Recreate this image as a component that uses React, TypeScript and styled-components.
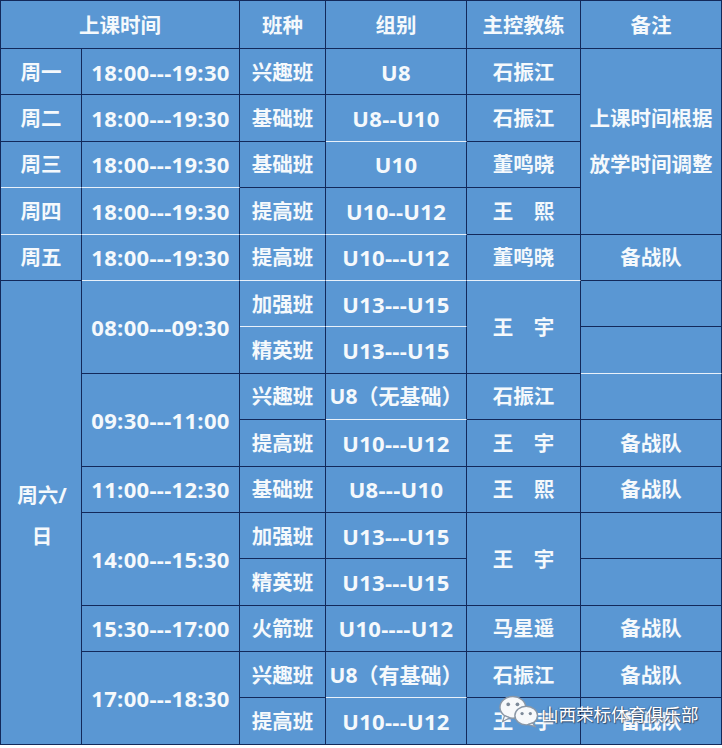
import styled, { createGlobalStyle } from 'styled-components';

type CellData = {
  r: number;
  c: number;
  rs?: number;
  cs?: number;
  text?: string;
  lift?: boolean;
};

type Script = 'latin' | 'cjk' | 'mixed';

const GAP = '\u3000';

// rows are 1-based grid lines: 1 = header, 2..6 = weekdays, 7..16 = weekend
const cells: CellData[] = [
  { r: 1, c: 1, cs: 2, text: '上课时间' },
  { r: 1, c: 3, text: '班种' },
  { r: 1, c: 4, text: '组别' },
  { r: 1, c: 5, text: '主控教练' },
  { r: 1, c: 6, text: '备注' },

  { r: 2, c: 1, text: '周一' },
  { r: 2, c: 2, text: '18:00---19:30' },
  { r: 2, c: 3, text: '兴趣班' },
  { r: 2, c: 4, text: 'U8' },
  { r: 2, c: 5, text: '石振江' },
  { r: 2, c: 6, rs: 4, text: '上课时间根据\n放学时间调整' },

  { r: 3, c: 1, text: '周二' },
  { r: 3, c: 2, text: '18:00---19:30' },
  { r: 3, c: 3, text: '基础班' },
  { r: 3, c: 4, text: 'U8--U10', lift: true },
  { r: 3, c: 5, text: '石振江' },

  { r: 4, c: 1, text: '周三', lift: true },
  { r: 4, c: 2, text: '18:00---19:30', lift: true },
  { r: 4, c: 3, text: '基础班' },
  { r: 4, c: 4, text: 'U10' },
  { r: 4, c: 5, text: '董鸣晓' },

  { r: 5, c: 1, text: '周四', lift: true },
  { r: 5, c: 2, text: '18:00---19:30', lift: true },
  { r: 5, c: 3, text: '提高班', lift: true },
  { r: 5, c: 4, text: 'U10--U12', lift: true },
  { r: 5, c: 5, text: `王${GAP}熙` },

  { r: 6, c: 1, text: '周五' },
  { r: 6, c: 2, text: '18:00---19:30', lift: true },
  { r: 6, c: 3, text: '提高班', lift: true },
  { r: 6, c: 4, text: 'U10---U12', lift: true },
  { r: 6, c: 5, text: '董鸣晓', lift: true },
  { r: 6, c: 6, text: '备战队' },

  { r: 7, c: 1, rs: 10, text: '周六/\n日' },

  { r: 7, c: 2, rs: 2, text: '08:00---09:30' },
  { r: 7, c: 3, text: '加强班', lift: true },
  { r: 7, c: 4, text: 'U13---U15', lift: true },
  { r: 7, c: 5, rs: 2, text: `王${GAP}宇` },
  { r: 7, c: 6 },
  { r: 8, c: 3, text: '精英班' },
  { r: 8, c: 4, text: 'U13---U15' },
  { r: 8, c: 6, lift: true },

  { r: 9, c: 2, rs: 2, text: '09:30---11:00' },
  { r: 9, c: 3, text: '兴趣班' },
  { r: 9, c: 4, text: 'U8（无基础）', lift: true },
  { r: 9, c: 5, text: '石振江' },
  { r: 9, c: 6 },
  { r: 10, c: 3, text: '提高班' },
  { r: 10, c: 4, text: 'U10---U12' },
  { r: 10, c: 5, text: `王${GAP}宇` },
  { r: 10, c: 6, text: '备战队' },

  { r: 11, c: 2, text: '11:00---12:30' },
  { r: 11, c: 3, text: '基础班' },
  { r: 11, c: 4, text: 'U8---U10' },
  { r: 11, c: 5, text: `王${GAP}熙` },
  { r: 11, c: 6, text: '备战队' },

  { r: 12, c: 2, rs: 2, text: '14:00---15:30' },
  { r: 12, c: 3, text: '加强班' },
  { r: 12, c: 4, text: 'U13---U15' },
  { r: 12, c: 5, rs: 2, text: `王${GAP}宇` },
  { r: 12, c: 6 },
  { r: 13, c: 3, text: '精英班' },
  { r: 13, c: 4, text: 'U13---U15' },
  { r: 13, c: 6 },

  { r: 14, c: 2, text: '15:30---17:00' },
  { r: 14, c: 3, text: '火箭班' },
  { r: 14, c: 4, text: 'U10----U12' },
  { r: 14, c: 5, text: '马星遥' },
  { r: 14, c: 6, text: '备战队' },

  { r: 15, c: 2, rs: 2, text: '17:00---18:30' },
  { r: 15, c: 3, text: '兴趣班' },
  { r: 15, c: 4, text: 'U8（有基础）', lift: true },
  { r: 15, c: 5, text: '石振江' },
  { r: 15, c: 6, text: '备战队' },
  { r: 16, c: 3, text: '提高班' },
  { r: 16, c: 4, text: 'U10---U12' },
  { r: 16, c: 5, text: `王${GAP}宇` },
  { r: 16, c: 6, text: '备战队' },
];

const scriptOf = (text = ''): Script => {
  const latin = /[A-Za-z0-9]/.test(text);
  const cjk = /[\u4e00-\u9fff]/.test(text);
  if (latin && cjk) return 'mixed';
  return latin ? 'latin' : 'cjk';
};

function WechatMark() {
  return (
    <svg width="42" height="34" viewBox="0 0 40 33">
      <ellipse cx="14" cy="12" rx="12.5" ry="10.5" fill="#f7f9fb" stroke="#8a97a6" strokeWidth="1.4" />
      <path d="M6 20 L4 26 L11 22 Z" fill="#f7f9fb" stroke="#8a97a6" strokeWidth="1.2" strokeLinejoin="round" />
      <circle cx="9.5" cy="9" r="1.8" fill="#7d8a99" />
      <circle cx="18.5" cy="9" r="1.8" fill="#7d8a99" />
      <ellipse cx="27" cy="20" rx="11" ry="9" fill="#f7f9fb" stroke="#8a97a6" strokeWidth="1.4" />
      <path d="M33 27 L36 31 L29 28.5 Z" fill="#f7f9fb" stroke="#8a97a6" strokeWidth="1.2" strokeLinejoin="round" />
      <circle cx="23" cy="18" r="1.6" fill="#7d8a99" />
      <circle cx="31" cy="18" r="1.6" fill="#7d8a99" />
    </svg>
  );
}

function App() {
  return (
    <>
      <GlobalStyle />
      <Page>
        <Table>
          {cells.map((cell) => (
            <Cell
              key={`${cell.r}-${cell.c}`}
              $r={cell.r}
              $c={cell.c}
              $rs={cell.rs ?? 1}
              $cs={cell.cs ?? 1}
              $lift={!!cell.lift}
              $script={scriptOf(cell.text)}
              $tall={cell.r === 7 && cell.c === 1}
            >
              {cell.text}
            </Cell>
          ))}
        </Table>
        <Watermark>
          <WechatMark />
          <MarkText>山西荣标体育俱乐部</MarkText>
        </Watermark>
      </Page>
    </>
  );
}

export default App;

const GlobalStyle = createGlobalStyle`
  html, body {
    margin: 0;
    padding: 0;
    background: #ffffff;
  }
`;

const Page = styled.div`
  position: relative;
  width: 722px;
  height: 748px;
  overflow: hidden;
`;

const Table = styled.div`
  display: grid;
  grid-template-columns: 81px 158px 86px 141px 114px 141px;
  grid-template-rows: 48px repeat(15, 46.4px);
  border-top: 1px solid #13295a;
  border-left: 1px solid #13295a;
  background: #5a97d3;
  width: 722px;
  box-sizing: border-box;
  font-family: 'Open Sans', 'Noto Sans CJK SC', sans-serif;
  font-weight: 700;
  color: #f5f9fc;
`;

const sizes: Record<Script, string> = {
  latin: '22px',
  cjk: '20.5px',
  mixed: '21px',
};

const Cell = styled.div<{
  $r: number;
  $c: number;
  $rs: number;
  $cs: number;
  $lift: boolean;
  $script: Script;
  $tall: boolean;
}>`
  grid-row: ${({ $r, $rs }) => `${$r} / span ${$rs}`};
  grid-column: ${({ $c, $cs }) => `${$c} / span ${$cs}`};
  display: flex;
  align-items: center;
  justify-content: center;
  text-align: center;
  white-space: pre-line;
  box-sizing: border-box;
  border-right: 1px solid #13295a;
  border-bottom: 1px solid ${({ $lift }) => ($lift ? '#e9f1fa' : '#13295a')};
  font-size: ${({ $script }) => sizes[$script]};
  line-height: ${({ $tall }) => ($tall ? '41px' : '46px')};
  padding-top: ${({ $tall }) => ($tall ? '8px' : '0')};
  padding-left: ${({ $tall }) => ($tall ? '2px' : '0')};
  letter-spacing: ${({ $script }) => ($script === 'latin' ? '0.3px' : '0')};
`;

const Watermark = styled.div`
  position: absolute;
  left: 498px;
  top: 695px;
  display: flex;
  align-items: center;
  gap: 1px;
`;

const MarkText = styled.span`
  font-family: 'Noto Sans CJK SC', sans-serif;
  font-weight: 400;
  font-size: 17.5px;
  color: #ffffff;
  margin-top: 2px;
  text-shadow:
    1px 1px 1px rgba(40, 50, 70, 0.75),
    -1px 0 1px rgba(40, 50, 70, 0.5);
`;
